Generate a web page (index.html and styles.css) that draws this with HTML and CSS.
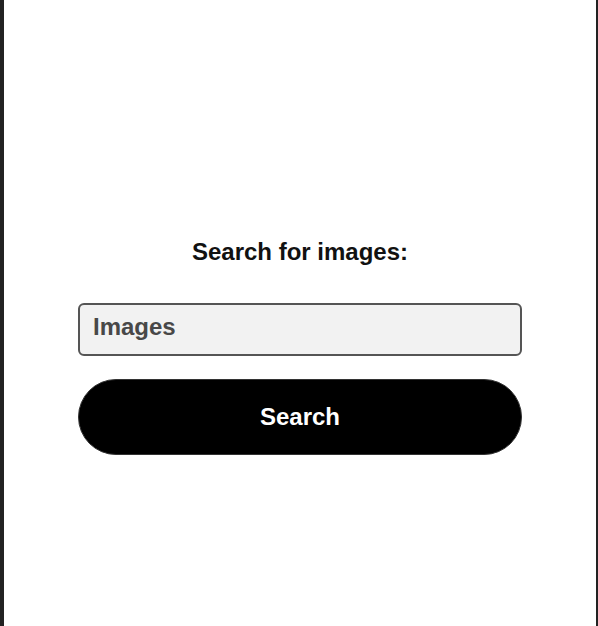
FILE: index.html
```html
<!DOCTYPE html>
<html lang="en">
<head>
<meta charset="utf-8">
<title>Search for images</title>
<link rel="stylesheet" href="styles.css">
</head>
<body>
<div class="frame">
  <main class="search">
    <h1 class="search-title">Search for images:</h1>
    <input class="search-input" type="text" placeholder="Images">
    <button class="search-button" type="button">Search</button>
  </main>
</div>
</body>
</html>
```
FILE: styles.css
```css
html, body {
  margin: 0;
  padding: 0;
  background: #ffffff;
}
.frame {
  box-sizing: border-box;
  height: 626px;
  border-left: 4px solid #222222;
  border-right: 2px solid #222222;
  background: #ffffff;
}
.search {
  display: flex;
  flex-direction: column;
  width: 444px;
  margin: 0 auto;
  padding-top: 238px;
  font-family: "Liberation Sans", Arial, sans-serif;
}
.search-title {
  margin: 0;
  font-size: 24px;
  line-height: 28px;
  font-weight: bold;
  color: #111111;
  text-align: center;
}
.search-input {
  box-sizing: border-box;
  margin-top: 37px;
  height: 53px;
  width: 100%;
  padding: 0 13px 6px;
  border: 2px solid #555555;
  border-radius: 6px;
  background: #f2f2f2;
  font-family: "Liberation Sans", Arial, sans-serif;
  font-size: 24px;
  font-weight: bold;
  color: #444444;
  outline: none;
}
.search-input::placeholder {
  color: #484848;
  opacity: 1;
}
.search-button {
  box-sizing: border-box;
  margin-top: 23px;
  height: 76px;
  width: 100%;
  border: 1px solid #333333;
  border-radius: 38px;
  background: #000000;
  color: #ffffff;
  font-family: "Liberation Sans", Arial, sans-serif;
  font-size: 24px;
  font-weight: bold;
  cursor: pointer;
}
```
